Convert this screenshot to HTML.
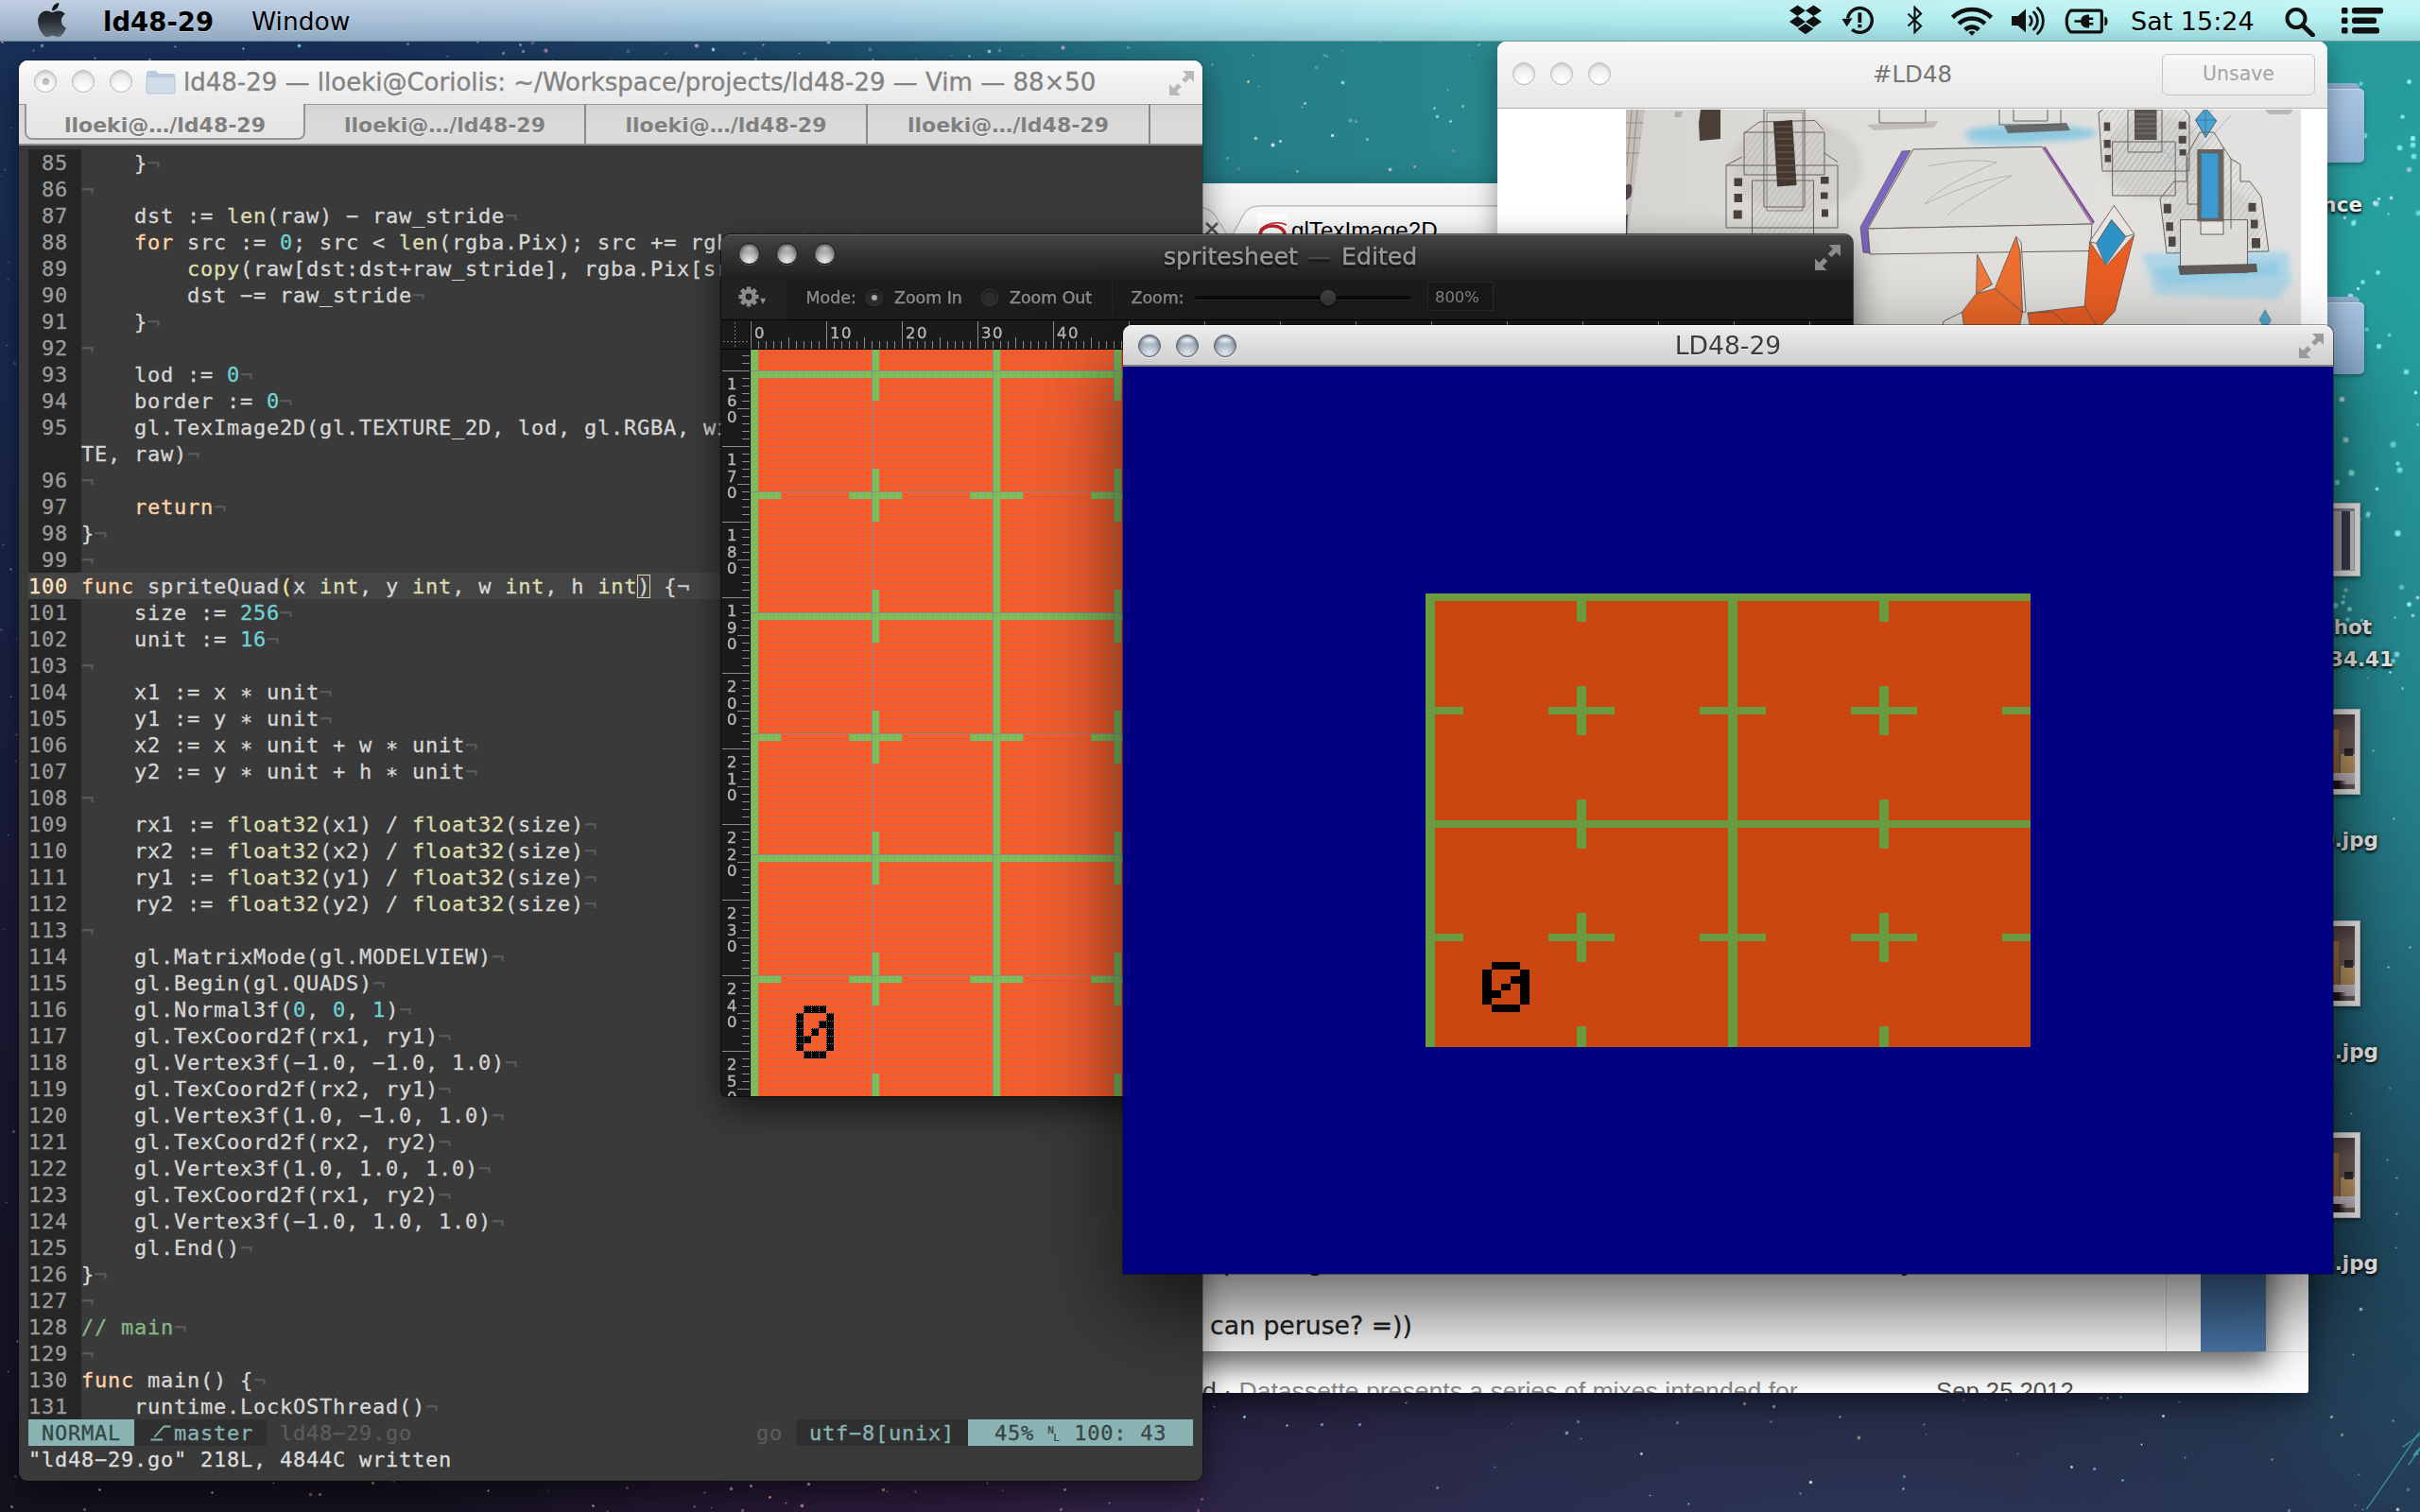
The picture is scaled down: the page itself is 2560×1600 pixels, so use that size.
<!DOCTYPE html>
<html lang="en"><head><meta charset="utf-8"><title>ld48-29</title>
<style>
*{box-sizing:border-box;margin:0;padding:0}
html,body{width:2560px;height:1600px;overflow:hidden}
body{position:relative;font-family:"Liberation Sans","DejaVu Sans",sans-serif;background-color:#17152a;
background-image:
 radial-gradient(ellipse 380px 620px at 2560px 300px, rgba(34,168,168,.7) 0%, rgba(34,160,165,.4) 50%, rgba(36,150,160,0) 100%),
 radial-gradient(ellipse 300px 700px at 2560px 950px, rgba(40,140,145,.5) 0%, rgba(36,120,135,.3) 50%, rgba(36,100,130,0) 100%),
 radial-gradient(ellipse 520px 420px at 2640px 1480px, rgba(40,88,112,.6) 0%, rgba(38,76,102,.35) 50%, rgba(36,60,90,0) 100%),
 radial-gradient(ellipse 1000px 420px at 2000px 1680px, rgba(48,60,94,.95) 0%, rgba(44,52,86,.7) 50%, rgba(40,40,70,0) 100%),
 radial-gradient(ellipse 800px 320px at 1200px 1690px, rgba(60,34,78,.95) 0%, rgba(52,30,70,.55) 55%, rgba(40,28,60,0) 100%),
 radial-gradient(ellipse 1900px 1400px at 2300px 60px, #2d9896 0%, #2a8e90 30%, #247a86 55%, rgba(30,84,112,.8) 75%, rgba(30,60,100,0) 100%),
 radial-gradient(ellipse 1700px 900px at 200px -100px, #18335c 0%, rgba(24,44,84,.7) 50%, rgba(26,30,60,0) 100%),
 linear-gradient(180deg,#1b2a50 0%,#1a1e3e 50%,#14121f 100%);}
.abs{position:absolute}
.stars{position:absolute;left:0;top:0;width:1px;height:1px;border-radius:50%;background:transparent}
/* windows */
.win{position:absolute;overflow:hidden}
.tl{position:absolute;width:24px;height:24px;border-radius:50%}
/* inactive traffic light */
.tl.in{background:radial-gradient(circle at 50% 85%,#fff 0%,#f4f4f4 40%,#e2e2e2 100%);border:1.5px solid #b9b9b9;box-shadow:inset 0 2px 3px rgba(0,0,0,.12)}
.tl.gr{background:radial-gradient(ellipse 55% 26% at 50% 20%,rgba(255,255,255,.9) 0%,rgba(255,255,255,0) 100%),radial-gradient(circle at 50% 88%,#e2e8ee 0%,#b6c2cc 35%,#8d9ba8 70%,#76838f 100%);border:1.5px solid #4f5a66;box-shadow:inset 0 1px 3px rgba(30,40,60,.5),0 1px 0 rgba(255,255,255,.7)}
.tl.dk{background:radial-gradient(ellipse 55% 24% at 50% 18%,rgba(255,255,255,.55) 0%,rgba(255,255,255,0) 100%),radial-gradient(circle at 50% 92%,#f0f0f0 0%,#bdbdbd 35%,#8a8a8a 70%,#666 100%);border:1.5px solid #141414;box-shadow:inset 0 2px 4px rgba(0,0,0,.45),0 1px 0 rgba(255,255,255,.18)}
/* terminal */
.term{position:absolute;left:10px;top:94px;width:1232px;font-family:"DejaVu Sans Mono","Liberation Mono",monospace;font-size:22px;letter-spacing:.756px;line-height:30px;-webkit-text-stroke-width:.3px;color:#d6d6d6;white-space:pre}
.r{height:28px;overflow:hidden}
.ln{background:#262626;color:#9c9c9c;display:inline-block;height:28px}
.cl{background:#444}
.cln{background:#444;color:#ffe4bd}
.k{color:#ffd2a7}.t{color:#dcdcb0}.n{color:#6fd3d3}.c{color:#87b787}.e{color:#5c5c5c}
.mp{background:#3a3a3a;color:#efe2a0}
.cur{outline:1.5px solid #d8d0b0;outline-offset:-1.5px}
.st{background:#3a3a3a}
.s1{background:#8ab4b4;color:#334646}.s2{background:#303030;color:#8ab4b4}.s3{color:#5c5c5c}
.s5{background:#303030;color:#8ab4b4}.s6{background:#8ab4b4;color:#3a4444}
.s1,.s2,.s3,.s5,.s6{display:inline-block;height:28px;vertical-align:top}
.br{display:inline-block;width:28px;height:28px;vertical-align:top}
.nl{display:inline-block;width:14px;height:28px;position:relative;vertical-align:top;letter-spacing:0}.nl b{position:absolute;font-size:11px;font-weight:normal;line-height:11px;-webkit-text-stroke-width:.2px}
.msg{color:#dcdcdc}
/* menubar */
#mb{position:absolute;left:0;top:0;width:2560px;height:44px;
background:linear-gradient(180deg,rgba(255,255,255,.28) 0%,rgba(255,255,255,.06) 45%,rgba(0,30,60,.13) 100%),
linear-gradient(90deg,#a9bcd3 0%,#a4bfd8 20%,#9fcadf 35%,#a2dae5 50%,#aae8eb 62%,#b2f1f1 100%);
border-bottom:1px solid rgba(40,80,90,.55);font-family:"DejaVu Sans","Liberation Sans",sans-serif;color:#000}
#mb .mi{position:absolute;top:2px;line-height:42px;font-size:26.5px;white-space:nowrap;text-shadow:0 1px 0 rgba(255,255,255,.5)}
#mb svg{position:absolute}
/* desktop icons */
.dl{position:absolute;font-family:"DejaVu Sans","Liberation Sans",sans-serif;font-weight:bold;font-size:21.5px;color:#eee;white-space:nowrap;text-shadow:0 2px 3px rgba(0,0,0,.95),0 0 4px rgba(0,0,0,.7);line-height:28px;text-align:right}
.fold{position:absolute;width:150px;border-radius:5px;background:linear-gradient(180deg,#a9c5e1 0%,#9dbcdc 45%,#8cb0d5 100%);box-shadow:0 2px 5px rgba(0,0,0,.35), inset 0 1px 0 rgba(255,255,255,.5)}
.foldb{position:absolute;width:150px;height:14px;border-radius:5px 5px 0 0;background:#8fb0d2}
.thumb{position:absolute;width:120px;background:#f2f2f2;border:1px solid #c4c4c4;box-shadow:0 2px 5px rgba(0,0,0,.5);padding:5px}
.thumb>div{width:100%;height:100%}
/* chrome + middle window */
#chrome{left:560px;top:194px;width:1882px;height:1280px;background:#fff;border-radius:9px 9px 2px 2px;box-shadow:0 10px 30px rgba(0,0,0,.45)}
#mid{left:600px;top:300px;width:1797px;height:1130px;background:#fff;border-radius:9px 9px 1px 1px;box-shadow:0 12px 30px 3px rgba(0,0,0,.55)}
/* ld48 */
#ld{left:1584px;top:44px;width:878px;height:1200px;background:#fff;border-radius:9px 9px 6px 6px;box-shadow:0 10px 28px rgba(0,0,0,.4)}
#ld .tb{position:absolute;left:0;top:0;width:100%;height:71px;background:linear-gradient(180deg,#f9f9f9 0%,#f0f0f0 50%,#e6e6e6 100%);border-bottom:1px solid #b4b4b4;box-shadow:inset 0 1px 0 #fff}
.ui{font-family:"DejaVu Sans","Liberation Sans",sans-serif}
#tw{left:20px;top:64px;width:1252px;height:1503px;background:#3a3a3a;border-radius:9px;box-shadow:0 12px 32px rgba(0,0,0,.5),0 0 0 1px rgba(0,0,0,.25)}
#tw .tb{position:absolute;left:0;top:0;width:100%;height:90px;background:linear-gradient(180deg,#fbfbfb 0%,#f1f1f1 25%,#e9e9e9 52%,#e6e6e6 100%);box-shadow:inset 0 1px 0 #fff}
#tw .tabs{position:absolute;left:0;top:46px;width:100%;height:44px;background:linear-gradient(180deg,#d4d4d4 0%,#d9d9d9 30%,#dbdbdb 100%);border-top:1.5px solid #9c9c9c;border-bottom:2px solid #8a8a8a}
#tw .tab{position:absolute;top:-1.5px;height:43px;width:298px;border-right:2px solid #8a8a8a;text-align:center;font-family:"DejaVu Sans","Liberation Sans",sans-serif;font-weight:bold;font-size:22px;color:#7f7f7f;line-height:46px;text-shadow:0 1px 0 rgba(255,255,255,.6);white-space:nowrap}
#tw .tab.sel{left:6px;width:297px;height:38.5px;background:linear-gradient(180deg,#e9e9e9,#e5e5e5);border:2px solid #959595;border-top:none;border-radius:0 0 8px 8px;line-height:46px}
.fs{position:absolute}
#sw{left:763px;top:248px;width:1197px;height:912px;background:#1b1b1b;border-radius:9px 9px 5px 5px;box-shadow:0 14px 36px rgba(0,0,0,.6),0 0 0 1px rgba(0,0,0,.6)}
#sw .tb{position:absolute;left:0;top:0;width:100%;height:47px;background:linear-gradient(180deg,#484848 0%,#3a3a3a 25%,#2a2a2a 70%,#202020 100%);box-shadow:inset 0 1px 0 #6a6a6a}
#sw .tool{position:absolute;left:0;top:47px;width:100%;height:44px;background:#1c1c1c;border-top:1px solid #1e1e1e;border-bottom:1.5px solid #050505}
#sw .lbl{position:absolute;top:54.5px;-webkit-text-stroke-width:.45px;font-family:"DejaVu Sans","Liberation Sans",sans-serif;font-size:17.4px;line-height:24px;color:#8c8c8c;white-space:nowrap;text-shadow:0 -1px 1px #000}
.rad{position:absolute;width:18px;height:18px;border-radius:50%;background:#2c2c2c;border:1px solid #3e3e3e;box-shadow:inset 0 1px 2px #000}
#sw .rt{position:absolute;letter-spacing:1.6px;-webkit-text-stroke-width:.4px;font-family:"DejaVu Sans","Liberation Sans",sans-serif;font-size:16.5px;color:#b4b4b4;line-height:16px}
#gw{left:1188px;top:344px;width:1280px;height:1004px;background:#000080;border-radius:9px 9px 0 0;box-shadow:0 36px 92px 0 rgba(0,0,0,.65),0 0 0 1px rgba(0,0,0,.35)}
#gw .tb{position:absolute;left:0;top:0;width:100%;height:44px;background:linear-gradient(180deg,#eeeeee 0%,#e0e0e0 40%,#cecece 100%);border-bottom:2px solid #7e7e7e;box-shadow:inset 0 1px 0 #fafafa}

</style></head>
<body>
<div class="stars" style="box-shadow:2511px 214px 0.5px 0.7px rgba(235,245,255,0.83),2538px 156px 1.5px 2.2px rgba(150,255,255,0.79),2497px 98px 0.5px 0.7px rgba(150,255,255,0.72),2481px 624px 1.1px 1.6px rgba(235,245,255,0.53),2498px 656px 0.9px 1.3px rgba(150,255,255,0.79),2498px 107px 0.6px 0.9px rgba(150,255,255,0.64),2485px 644px 1.2px 1.8px rgba(150,255,255,0.78),2483px 655px 1.1px 1.6px rgba(150,255,255,0.69),2478px 637px 1.0px 1.5px rgba(150,255,255,0.81),2538px 497px 1.5px 2.3px rgba(150,255,255,0.73),2516px 366px 1.2px 1.9px rgba(150,255,255,0.90),2501px 143px 1.5px 2.2px rgba(150,255,255,0.76),2527px 354px 0.9px 1.4px rgba(150,255,255,0.56),2513px 215px 1.6px 2.3px rgba(235,245,255,0.71),2479px 631px 0.8px 1.2px rgba(150,255,255,0.67),2533px 653px 0.5px 0.8px rgba(235,245,255,0.53),2504px 545px 1.2px 1.9px rgba(150,255,255,0.53),2552px 651px 0.9px 1.3px rgba(235,245,255,0.64),2555px 415px 0.8px 1.2px rgba(150,255,255,0.97),2548px 179px 1.3px 2.0px rgba(235,245,255,0.53),2486px 313px 1.4px 2.2px rgba(235,245,255,0.70),2480px 230px 0.7px 1.1px rgba(235,245,255,0.70),2487px 500px 1.6px 2.4px rgba(150,255,255,0.85),2557px 449px 0.6px 0.9px rgba(150,255,255,0.58),2499px 298px 1.1px 1.7px rgba(150,255,255,0.74),2503px 348px 1.0px 1.6px rgba(150,255,255,0.57),2548px 639px 1.2px 1.8px rgba(150,255,255,0.98),2535px 692px 1.4px 2.2px rgba(150,255,255,0.73),2557px 632px 0.9px 1.3px rgba(235,245,255,0.70),2531px 470px 1.6px 2.4px rgba(150,255,255,0.60),2526px 226px 0.5px 0.7px rgba(150,255,255,0.67),2470px 640px 1.5px 2.3px rgba(150,255,255,0.77),2548px 86px 1.1px 1.7px rgba(150,255,255,0.94),2489px 318px 1.0px 1.5px rgba(150,255,255,0.80),2484px 559px 0.8px 1.2px rgba(235,245,255,0.74),2488px 164px 1.0px 1.5px rgba(150,255,255,0.87),2558px 225px 1.5px 2.3px rgba(150,255,255,0.60),2516px 210px 0.8px 1.1px rgba(150,255,255,0.88),2552px 153px 1.5px 2.2px rgba(150,255,255,0.76),2515px 288px 1.1px 1.7px rgba(150,255,255,0.82),2494px 305px 0.7px 1.0px rgba(235,245,255,0.87),2536px 564px 1.6px 2.4px rgba(150,255,255,0.87),2505px 543px 1.1px 1.7px rgba(150,255,255,0.60),2514px 517px 0.8px 1.3px rgba(150,255,255,0.98),2498px 164px 0.8px 1.2px rgba(150,255,255,0.74),2531px 699px 1.2px 1.8px rgba(150,255,255,0.74),2552px 146px 1.3px 2.0px rgba(150,255,255,0.95),2495px 549px 1.2px 1.7px rgba(150,255,255,0.72),2481px 465px 1.5px 2.3px rgba(235,245,255,0.70),2490px 234px 1.1px 1.7px rgba(150,255,255,0.51),2529px 209px 0.8px 1.2px rgba(235,245,255,0.83),2540px 621px 1.4px 2.0px rgba(150,255,255,0.51),2553px 165px 1.4px 2.2px rgba(150,255,255,0.72),2497px 88px 1.0px 1.5px rgba(150,255,255,0.61),2545px 393px 1.4px 2.1px rgba(150,255,255,0.77),2477px 422px 1.4px 2.1px rgba(235,245,255,0.83),2536px 490px 1.0px 1.5px rgba(150,255,255,0.77),2472px 510px 1.3px 2.0px rgba(150,255,255,0.80),2489px 236px 1.3px 1.9px rgba(150,255,255,0.74),2541px 123px 1.0px 1.6px rgba(150,255,255,0.84),2531px 1503px 0.3px 0.4px rgba(150,255,255,0.74),2494px 983px 0.6px 0.9px rgba(150,255,255,0.69),2541px 728px 0.6px 1.0px rgba(150,255,255,0.52),2534px 1320px 0.4px 0.6px rgba(255,250,200,0.40),2535px 1246px 0.4px 0.6px rgba(235,245,255,0.55),2536px 1597px 0.8px 1.2px rgba(235,245,255,0.76),2495px 1560px 0.3px 0.5px rgba(235,245,255,0.37),2526px 1023px 0.5px 0.8px rgba(150,255,255,0.64),2497px 1385px 0.8px 1.2px rgba(235,245,255,0.69),2489px 1433px 0.3px 0.5px rgba(255,250,200,0.63),2487px 1178px 0.3px 0.5px rgba(150,255,255,0.67),2532px 866px 0.4px 0.5px rgba(255,250,200,0.72),2525px 1227px 0.4px 0.6px rgba(235,245,255,0.47),2510px 794px 0.5px 0.7px rgba(255,250,200,0.48),2528px 1151px 0.5px 0.7px rgba(255,250,200,0.31),2549px 1002px 0.3px 0.5px rgba(255,250,200,0.78),2499px 1597px 0.4px 0.6px rgba(150,255,255,0.34),2493px 976px 0.8px 1.2px rgba(150,255,255,0.71),2556px 1538px 0.6px 0.9px rgba(235,245,255,0.50),2535px 1284px 0.3px 0.5px rgba(235,245,255,0.65),2477px 1518px 0.8px 1.2px rgba(255,250,200,0.39),2504px 717px 0.4px 0.6px rgba(255,250,200,0.34),2547px 1576px 0.8px 1.2px rgba(150,255,255,0.33),2528px 711px 0.5px 0.8px rgba(235,245,255,0.80),2504px 1336px 0.7px 1.1px rgba(150,255,255,0.32),1331px 91px 0.4px 0.6px rgba(235,245,255,0.33),1434px 128px 0.5px 0.7px rgba(230,160,190,0.76),1531px 95px 0.3px 0.4px rgba(235,245,255,0.51),1403px 59px 0.7px 1.0px rgba(150,255,255,0.31),1372px 181px 0.6px 0.9px rgba(255,250,200,0.45),1496px 176px 0.6px 0.9px rgba(230,160,190,0.80),1534px 128px 0.5px 0.8px rgba(150,255,255,0.89),1346px 153px 1.0px 1.4px rgba(235,245,255,0.89),1282px 68px 0.3px 0.4px rgba(235,245,255,0.56),1470px 179px 0.8px 1.3px rgba(235,245,255,0.66),1298px 167px 0.6px 0.9px rgba(150,255,255,0.39),1409px 143px 0.7px 1.1px rgba(235,245,255,0.88),1400px 58px 0.4px 0.6px rgba(235,245,255,0.43),1446px 147px 0.7px 1.0px rgba(150,255,255,0.58),1377px 113px 0.3px 0.5px rgba(230,160,190,0.77),1320px 86px 0.6px 0.9px rgba(255,250,200,0.65),1428px 127px 1.1px 1.6px rgba(150,255,255,0.35),1354px 149px 0.7px 1.0px rgba(235,245,255,0.73),1420px 87px 0.9px 1.3px rgba(150,255,255,0.79),1537px 159px 0.7px 1.0px rgba(230,160,190,0.38),1533px 195px 0.7px 1.1px rgba(150,255,255,0.80),1392px 71px 0.8px 1.2px rgba(150,255,255,0.33),1328px 146px 0.8px 1.2px rgba(255,250,200,0.64),1547px 112px 0.6px 1.0px rgba(255,250,200,0.46),1310px 178px 0.7px 1.0px rgba(230,160,190,0.36),1517px 114px 0.4px 0.7px rgba(150,255,255,0.81),1380px 109px 0.6px 0.9px rgba(255,250,200,0.60),1520px 123px 0.8px 1.2px rgba(150,255,255,0.67),158px 63px 0.7px 1.1px rgba(235,245,255,0.47),1419px 53px 0.3px 0.4px rgba(235,245,255,0.31),550px 47px 0.5px 0.7px rgba(235,245,255,0.64),1057px 53px 0.8px 1.2px rgba(150,180,255,0.53),1124px 50px 1.0px 1.4px rgba(230,160,190,0.79),35px 53px 0.6px 0.9px rgba(150,180,255,0.34),920px 52px 1.0px 1.4px rgba(150,180,255,0.40),431px 46px 0.6px 1.0px rgba(150,255,255,0.37),736px 48px 0.8px 1.2px rgba(230,160,190,0.74),473px 59px 0.4px 0.6px rgba(150,180,255,0.50),1006px 58px 0.4px 0.5px rgba(150,180,255,0.45),704px 56px 0.5px 0.7px rgba(230,160,190,0.36),664px 54px 0.9px 1.4px rgba(150,180,255,0.36),1460px 44px 0.3px 0.4px rgba(230,160,190,0.43),799px 62px 0.6px 0.9px rgba(150,255,255,0.48),563px 45px 0.9px 1.3px rgba(230,160,190,0.35),584px 64px 0.4px 0.7px rgba(235,245,255,0.42),1046px 54px 0.8px 1.3px rgba(235,245,255,0.69),876px 44px 1.0px 1.4px rgba(150,180,255,0.76),1124px 50px 0.8px 1.2px rgba(150,255,255,0.32),923px 63px 0.5px 0.7px rgba(235,245,255,0.62),100px 61px 0.6px 0.8px rgba(235,245,255,0.39),577px 53px 1.0px 1.5px rgba(230,160,190,0.67),532px 56px 0.7px 1.0px rgba(235,245,255,0.45),807px 47px 0.3px 0.5px rgba(235,245,255,0.62),1025px 59px 0.5px 0.7px rgba(235,245,255,0.53),1554px 58px 0.4px 0.6px rgba(150,180,255,0.37),185px 49px 0.5px 0.7px rgba(230,160,190,0.58),754px 52px 0.8px 1.2px rgba(235,245,255,0.74),845px 56px 0.4px 0.6px rgba(150,180,255,0.67),553px 54px 0.7px 1.0px rgba(150,255,255,0.55),737px 48px 0.9px 1.4px rgba(235,245,255,0.35),787px 56px 0.5px 0.7px rgba(150,180,255,0.52),44px 48px 0.8px 1.2px rgba(150,255,255,0.51),969px 62px 0.5px 0.8px rgba(150,180,255,0.30),1081px 58px 0.3px 0.5px rgba(150,180,255,0.42),316px 48px 0.8px 1.2px rgba(150,255,255,0.77),1325px 58px 0.3px 0.4px rgba(150,255,255,0.58),257px 51px 0.5px 0.7px rgba(150,255,255,0.62),262px 64px 0.6px 0.9px rgba(230,160,190,0.56),1564px 47px 0.6px 1.0px rgba(150,255,255,0.34),1193px 50px 0.8px 1.3px rgba(150,180,255,0.43),2px 44px 0.5px 0.7px rgba(230,160,190,0.80),647px 64px 0.4px 0.6px rgba(235,245,255,0.54),505px 44px 0.5px 0.7px rgba(150,180,255,0.65),1316px 1499px 0.6px 0.9px rgba(150,255,255,0.83),1438px 1507px 0.8px 1.1px rgba(150,180,255,0.70),1736px 1538px 0.6px 0.9px rgba(235,245,255,0.72),2014px 1562px 0.7px 1.0px rgba(150,255,255,0.42),2305px 1483px 0.3px 0.5px rgba(150,180,255,0.60),1669px 1504px 0.7px 1.0px rgba(150,255,255,0.43),1876px 1488px 0.7px 1.1px rgba(150,255,255,0.67),2265px 1528px 0.3px 0.4px rgba(235,245,255,0.87),2077px 1481px 0.6px 0.8px rgba(150,180,255,0.31),2122px 1481px 0.5px 0.7px rgba(235,245,255,0.41),1915px 1568px 0.8px 1.1px rgba(235,245,255,0.90),1946px 1499px 0.5px 0.8px rgba(150,180,255,0.69),2229px 1479px 0.4px 0.6px rgba(255,250,200,0.70),2037px 1517px 0.2px 0.3px rgba(150,255,255,0.40),1845px 1485px 0.7px 1.1px rgba(255,250,200,0.55),2421px 1598px 0.7px 1.0px rgba(150,180,255,0.53),1904px 1580px 0.6px 0.9px rgba(150,255,255,0.35),1672px 1522px 0.4px 0.6px rgba(150,255,255,0.42),2243px 1478px 0.6px 0.9px rgba(150,255,255,0.45),2100px 1480px 0.2px 0.4px rgba(150,255,255,0.32),1398px 1507px 0.7px 1.1px rgba(150,180,255,0.75),1966px 1521px 0.8px 1.2px rgba(255,250,200,0.50),1361px 1508px 0.4px 0.6px rgba(255,250,200,0.85),2491px 1592px 0.3px 0.5px rgba(235,245,255,0.31),2245px 1566px 0.4px 0.6px rgba(150,255,255,0.87),1786px 1591px 0.3px 0.4px rgba(150,255,255,0.79),2288px 1498px 0.6px 1.0px rgba(235,245,255,0.78),1581px 1552px 0.4px 0.6px rgba(150,180,255,0.50),2013px 1575px 0.4px 0.7px rgba(235,245,255,0.61),1599px 1506px 0.2px 0.3px rgba(150,255,255,0.34),2403px 1544px 0.5px 0.7px rgba(255,250,200,0.40),1487px 1484px 0.3px 0.5px rgba(255,250,200,0.67),2134px 1538px 0.3px 0.4px rgba(150,255,255,0.40),2215px 1554px 0.7px 1.1px rgba(150,180,255,0.75),1520px 1574px 0.5px 0.8px rgba(255,250,200,0.48),2035px 1507px 0.3px 0.5px rgba(255,250,200,0.42),1774px 1505px 0.7px 1.1px rgba(150,180,255,0.47),1657px 1516px 0.8px 1.2px rgba(235,245,255,0.54),2311px 1542px 0.3px 0.4px rgba(150,180,255,0.69),2222px 1479px 0.7px 1.1px rgba(235,245,255,0.30),1745px 1582px 0.2px 0.3px rgba(150,255,255,0.85),1873px 1504px 0.6px 0.8px rgba(235,245,255,0.33),2466px 1499px 0.7px 1.1px rgba(235,245,255,0.52),2191px 1552px 0.6px 0.9px rgba(255,250,200,0.76),1284px 1488px 0.4px 0.6px rgba(255,250,200,0.43),289px 1569px 0.2px 0.3px rgba(230,160,190,0.90),416px 1567px 0.4px 0.6px rgba(255,250,200,0.55),1271px 1586px 0.7px 1.0px rgba(230,160,190,0.42),1122px 1597px 0.7px 1.0px rgba(230,160,190,0.54),1126px 1576px 0.6px 0.9px rgba(235,245,255,0.62),814px 1584px 0.6px 0.9px rgba(255,150,130,0.89),855px 1570px 0.7px 1.1px rgba(255,250,200,0.75),848px 1593px 0.8px 1.2px rgba(230,160,190,0.82),745px 1579px 0.3px 0.5px rgba(255,150,130,0.74),12px 1594px 0.7px 1.0px rgba(230,160,190,0.55),831px 1590px 0.3px 0.4px rgba(255,150,130,0.76),105px 1576px 0.4px 0.7px rgba(235,245,255,0.78),1173px 1590px 0.3px 0.4px rgba(235,245,255,0.60),580px 1577px 0.2px 0.4px rgba(255,170,120,0.40),785px 1598px 0.7px 1.1px rgba(230,160,190,0.48),89px 1597px 0.8px 1.1px rgba(255,250,200,0.33),794px 1572px 0.7px 1.0px rgba(235,245,255,0.67),328px 1581px 0.7px 1.1px rgba(255,170,120,0.54),968px 1578px 0.4px 0.7px rgba(255,170,120,0.43),1060px 1577px 0.3px 0.4px rgba(255,150,130,0.52),394px 1569px 0.6px 0.9px rgba(255,170,120,0.81),663px 1574px 0.5px 0.8px rgba(255,150,130,0.66),627px 1593px 0.5px 0.7px rgba(255,250,200,0.65),752px 1595px 0.2px 0.3px rgba(255,170,120,0.56),1267px 1598px 0.7px 1.0px rgba(255,150,130,0.44),938px 1578px 0.2px 0.4px rgba(255,150,130,0.54),734px 1594px 0.5px 0.7px rgba(255,250,200,0.36),1044px 1569px 0.2px 0.4px rgba(230,160,190,0.68),642px 1599px 0.5px 0.8px rgba(230,160,190,0.33),773px 1575px 0.8px 1.2px rgba(230,160,190,0.81),224px 1579px 0.5px 0.7px rgba(230,160,190,0.89),338px 1581px 0.6px 0.8px rgba(230,160,190,0.80),516px 1577px 0.4px 0.5px rgba(255,250,200,0.84),934px 1576px 0.8px 1.1px rgba(255,250,200,0.60),6px 1272px 0.3px 0.5px rgba(150,180,255,0.45),11px 135px 0.3px 0.4px rgba(235,245,255,0.27),8px 1451px 0.3px 0.4px rgba(150,180,255,0.56),8px 295px 0.6px 0.9px rgba(230,160,190,0.22),14px 1197px 0.6px 1.0px rgba(230,160,190,0.43),3px 576px 0.4px 0.6px rgba(230,160,190,0.45),11px 602px 0.5px 0.7px rgba(150,180,255,0.60),11px 737px 0.3px 0.4px rgba(235,245,255,0.38),1px 666px 0.5px 0.8px rgba(230,160,190,0.30),18px 1419px 0.6px 0.9px rgba(150,180,255,0.49),7px 365px 0.4px 0.6px rgba(150,180,255,0.45),16px 805px 0.3px 0.5px rgba(235,245,255,0.25),20px 153px 0.5px 0.7px rgba(235,245,255,0.22),9px 277px 0.3px 0.5px rgba(230,160,190,0.34),18px 676px 0.4px 0.6px rgba(230,160,190,0.25),15px 384px 0.6px 0.9px rgba(235,245,255,0.21),4px 983px 0.3px 0.4px rgba(235,245,255,0.23),8px 883px 0.2px 0.3px rgba(150,180,255,0.59),17px 777px 0.4px 0.6px rgba(230,160,190,0.46),16px 1562px 0.7px 1.0px rgba(150,180,255,0.30),1px 186px 0.3px 0.4px rgba(230,160,190,0.21),5px 179px 0.5px 0.7px rgba(235,245,255,0.20)"></div>
<!-- desktop icons on the right strip -->
<div class="foldb" style="left:2346px;top:88px"></div><div class="fold" style="left:2351px;top:94px;height:78px"></div>
<div class="dl" style="right:61px;top:203px">Reference</div>
<div class="foldb" style="left:2346px;top:314px"></div><div class="fold" style="left:2351px;top:320px;height:76px"></div>
<div class="thumb" style="left:2377px;top:532px;height:78px"><div style="background:linear-gradient(90deg,#c2c2c2 0%,#b4b4b4 88%,#453f58 88%,#453f58 96.500%,#d0d0d0 96.500%);border:1px solid #aaa;border-top:3px solid #8a8a90"></div></div>
<div class="dl" style="right:51px;top:650px">Screen Shot</div>
<div class="dl" style="right:28px;top:684px">2014-0…15.34.41</div>
<div class="thumb" style="left:2377px;top:750px;height:91px"><div style="background:linear-gradient(90deg,#1e181c 0%,#1e181c 84%,rgba(30,24,28,0) 92%) no-repeat 0 70px/108px 9px,linear-gradient(180deg,#cfc6cc,#b8aeb6) no-repeat 80px 62px/28px 12px,linear-gradient(180deg,#2a2228,#3a3038) no-repeat 97px 36px/9px 8px,linear-gradient(180deg,#c8a26e,#b48c5a) no-repeat 93px 42px/15px 24px,linear-gradient(180deg,#b4834e,#9c6c3e) no-repeat 83px 16px/8px 50px,linear-gradient(180deg,#54464a 0%,#75645e 30%,#6c5c56 100%)"></div></div>
<div class="dl" style="right:44px;top:875px">IMG_0450.jpg</div>
<div class="thumb" style="left:2377px;top:974px;height:91px"><div style="background:linear-gradient(90deg,#1e181c 0%,#1e181c 84%,rgba(30,24,28,0) 92%) no-repeat 0 70px/108px 9px,linear-gradient(180deg,#cfc6cc,#b8aeb6) no-repeat 80px 62px/28px 12px,linear-gradient(180deg,#2a2228,#3a3038) no-repeat 97px 36px/9px 8px,linear-gradient(180deg,#c8a26e,#b48c5a) no-repeat 93px 42px/15px 24px,linear-gradient(180deg,#b4834e,#9c6c3e) no-repeat 83px 16px/8px 50px,linear-gradient(180deg,#54464a 0%,#75645e 30%,#6c5c56 100%)"></div></div>
<div class="dl" style="right:44px;top:1099px">IMG_0451.jpg</div>
<div class="thumb" style="left:2377px;top:1198px;height:91px"><div style="background:linear-gradient(90deg,#1e181c 0%,#1e181c 84%,rgba(30,24,28,0) 92%) no-repeat 0 70px/108px 9px,linear-gradient(180deg,#cfc6cc,#b8aeb6) no-repeat 80px 62px/28px 12px,linear-gradient(180deg,#2a2228,#3a3038) no-repeat 97px 36px/9px 8px,linear-gradient(180deg,#c8a26e,#b48c5a) no-repeat 93px 42px/15px 24px,linear-gradient(180deg,#b4834e,#9c6c3e) no-repeat 83px 16px/8px 50px,linear-gradient(180deg,#54464a 0%,#75645e 30%,#6c5c56 100%)"></div></div>
<div class="dl" style="right:44px;top:1323px">IMG_0452.jpg</div>
<svg class="abs" style="left:2490px;top:1500px" width="70" height="100" viewBox="0 0 70 100"><g fill="none" stroke="#3f9f9c" stroke-width="1.400" stroke-linecap="round" opacity=".85"><path d="M13.700 96.600C30 74 50 44 69 16"/><path d="M58 50C62 44 66 38 70 33"/><path d="M52 31C58 27 64 22 70 18"/><path d="M64 40C66 37 68 35 70 33" stroke-width="3"/></g></svg>
<!-- browser window (back) -->
<div class="win" id="chrome">
<div class="abs" style="left:0;top:0;width:100%;height:60px;background:linear-gradient(180deg,#f7f7f7 0%,#ececec 60%,#e4e4e4 100%)"></div>
<svg class="abs" style="left:700px;top:18px" width="330" height="46" viewBox="0 0 330 46"><path d="M0 6.500C14 6.500 22 9 28 20L40 40H0z" fill="#e9e9e9" stroke="#b9b9b9" stroke-width="1.200"/><path d="M42 40 55 16C59 9 64 5.800 74 5.800H330V40z" fill="#f7f7f7" stroke="#b4b4b4" stroke-width="1.200"/><path d="M16 24l12 12m0-12-12 12" stroke="#555" stroke-width="2.600" fill="none"/><rect x="70" y="14" width="32" height="30" fill="#fff"/><g fill="none" stroke="#c4242c"><ellipse cx="86" cy="36" rx="13" ry="9" stroke-width="3.600"/><path d="M73 31C81 23 93 22 101 26" stroke-width="1.600"/></g></svg>
<div class="abs" style="left:806px;top:35px;font-size:24.2px;line-height:30px;color:#000;white-space:nowrap">glTexImage2D</div>
<div class="abs" style="left:0;top:1236px;width:100%;height:1px;background:#e4e4e4"></div>
<div class="abs" style="left:712px;top:1262px;font-size:26.6px;color:#8c8c8c;white-space:nowrap;line-height:32px"><span style="color:#444">d ·</span> Datassette presents a series of mixes intended for</div>
<div class="abs" style="left:1488px;top:1262px;font-size:25.7px;color:#555;white-space:nowrap;line-height:32px">Sep 25 2012</div>
</div>
<!-- middle window -->
<div class="win" id="mid">
<div class="abs" style="left:1691px;top:0;width:1px;height:100%;background:#dcdcdc"></div>
<div class="abs" style="left:1728px;top:0;width:69px;height:100%;background:linear-gradient(180deg,#3a5f8c 0%,#41699a 90%,#4a77a8 100%)"></div>
<div class="abs" style="left:680px;top:1018px;font-family:'DejaVu Sans','Liberation Sans',sans-serif;font-size:26.7px;color:#222;white-space:nowrap;line-height:34px">speaking of which will there be a behind the scene bit you</div>
<div class="abs" style="left:680px;top:1086px;font-family:'DejaVu Sans','Liberation Sans',sans-serif;font-size:26.7px;color:#222;-webkit-text-stroke-width:.3px;white-space:nowrap;line-height:34px">can peruse? =))</div>
</div>
<!-- #LD48 window -->
<div class="win" id="ld">
<div class="tb"></div>
<div class="tl in" style="left:16px;top:22px"></div><div class="tl in" style="left:56px;top:22px"></div><div class="tl in" style="left:96px;top:22px"></div>
<div class="abs ui" style="left:0;top:17px;width:100%;text-align:center;font-size:24.5px;color:#757575;line-height:36px">#LD48</div>
<div class="abs ui" style="left:703px;top:13px;width:162px;height:44px;border:1.5px solid #c6c6c6;border-radius:6px;background:linear-gradient(180deg,#f8f8f8,#ececec);text-align:center;font-size:20.5px;line-height:40px;color:#a4a4a4">Unsave</div>
<svg class="abs" style="left:136px;top:72px;filter:blur(.7px)" width="714" height="232" viewBox="0 0 714 232">
<defs><filter id="bl" x="-10%" y="-30%" width="120%" height="160%"><feGaussianBlur stdDeviation="3"/></filter><linearGradient id="pap" x1="0" y1="0" x2="1" y2="0"><stop offset="0" stop-color="#d6d4d0"/><stop offset=".4" stop-color="#e0dfdc"/><stop offset="1" stop-color="#e2e1df"/></linearGradient>
<pattern id="hat" width="5" height="5" patternUnits="userSpaceOnUse" patternTransform="rotate(-55)"><path d="M0 2.500H5" stroke="#888" stroke-width=".8" opacity=".32"/></pattern>
<pattern id="hat2" width="3" height="3" patternUnits="userSpaceOnUse"><path d="M0 1.500H3" stroke="#2c2622" stroke-width="1.500"/></pattern></defs>
<rect width="714" height="232" fill="url(#pap)"/>
<!-- notebook edge -->
<path d="M0 0H20L2 132H0z" fill="#c4bfbb"/><path d="M6 0 1 60M12 0 4 90M0 14H18M0 30H16M0 46H14" stroke="#8a8480" stroke-width=".8" fill="none"/><path d="M0 80C6 76 8 82 5 92L0 96zM0 112 2 110 1 132H0z" fill="#4e4450"/>
<!-- blue scribbles -->
<g filter="url(#bl)"><ellipse cx="428" cy="25" rx="70" ry="9" fill="#7fc4e0" opacity=".85"/><ellipse cx="400" cy="32" rx="40" ry="6" fill="#8fcde6" opacity=".7"/></g>
<g filter="url(#bl)"><path d="M546 152 700 150 704 182 690 200 560 196z" fill="#9ed3ea" opacity=".75"/><path d="M556 168 690 160 692 176 570 186z" fill="#86c7e3" opacity=".6"/><ellipse cx="180" cy="60" rx="70" ry="50" fill="#b9b6b2" opacity=".35"/><ellipse cx="560" cy="50" rx="55" ry="45" fill="#b9b6b2" opacity=".35"/><ellipse cx="620" cy="120" rx="50" ry="40" fill="#b9b6b2" opacity=".3"/></g>
<!-- dark tower top-left -->
<path d="M79 0H100L100 31 78 33 77 14z" fill="#4b4138"/><path d="M52 2h8l-2 6h-7z" fill="#999" opacity=".6"/>
<!-- left building -->
<g fill="none" stroke="#67625d" stroke-width="1" stroke-linejoin="round">
<rect x="125" y="24" width="85" height="45" fill="url(#hat)"/><path d="M125 25 141 13 200 11.500 209 21.500"/>
<rect x="106" y="59" width="118" height="66"/><path d="M106 59 123 50M224 55.500 210 46"/>
<rect x="146" y="0" width="43" height="103"/><rect x="149" y="3" width="38" height="104" stroke-width=".7"/>
<rect x="133.500" y="75" width="65" height="62" fill="url(#hat)"/>
</g>
<path d="M156 13 176 11 180.500 80 160 81.500z" fill="#42382f"/><path d="M158 18H177M158 24H178M159 31H178M159 38H179M159 45H179M160 52H179M160 59H180M160 66H180M161 73H180" stroke="#7a6f66" stroke-width=".8"/>
<g fill="#4a4038"><rect x="114.500" y="72.500" width="8.500" height="8.500"/><rect x="114.500" y="89" width="8.500" height="9"/><rect x="113.700" y="106.500" width="9" height="9"/><rect x="206" y="71" width="8.500" height="7.500"/><rect x="206" y="87.500" width="7.500" height="7"/><rect x="207" y="105.500" width="7" height="8"/></g>
<!-- top middle box -->
<g fill="none" stroke="#67625d" stroke-width="1"><path d="M268 0V14H317V0"/><path d="M395 0V16H460V0M410 0V12H446V0"/></g>
<path d="M255 16 330 12 326 19 262 22z" fill="#aaa6a2" opacity=".6"/><path d="M400 17 466 14 470 22 404 25z" fill="#5e5a57" opacity=".85"/>
<!-- slab -->
<path d="M304 42 440 39.300 493 121 256 126z" fill="#dcdbd7" stroke="#67625d" stroke-width="1"/>
<path d="M256 126 493 121 491 149.500 258 153z" fill="#dfdedb" stroke="#67625d" stroke-width="1"/>
<path d="M292 44 301 43.500 255 125.500 258 152 251 151 248 124.500z" fill="#7b66c4" stroke="#5b5651" stroke-width=".8"/>
<path d="M441 39.500 444 39.500 496 119 494 121z" fill="#8a4aa0"/>
<path d="M320 60C350 54 372 52 392 56 360 70 330 84 316 100 350 84 384 72 408 70 380 86 352 100 340 112" fill="none" stroke="#a9a7a3" stroke-width="1" opacity=".8"/>
<!-- fox -->
<g stroke="#6a5a50" stroke-width=".9" stroke-linejoin="round">
<path d="M371.500 153 387.500 185 370.600 194.800z" fill="#f07a3c"/>
<path d="M412.700 134.400 390.200 189.500 419.500 214.300 417 150z" fill="#ee6f30"/><path d="M412.700 134.400 417 150 419.500 214.300 423 214 418 140z" fill="#e8e6e2"/>
<path d="M390.200 189.500 419.500 214.300 416 232H356L355.500 214.300 370.600 194.800z" fill="#ec6a2a"/>
<path d="M336 224 355.500 214.300 358 232H334z" fill="#e4e2de"/>
<path d="M490.600 139.700 508.300 165.500 537.700 132.600 517.200 213.400 499.500 232H428L424.800 215.200 485.200 208z" fill="#ea5e24"/>
<path d="M516.300 101.500 537.700 131.700 528.800 134.400 513.700 116.600 497.700 141.500 490.600 139.700z" fill="#e6e4e0"/>
<path d="M513.700 116.600 528.800 134.400 507.500 164.600 497.700 141.500z" fill="#2d93c6"/>
<path d="M424.800 215.200 452 214 470 232M485.200 208 500 232" fill="none"/>
</g>
<!-- right building 1 -->
<g fill="none" stroke="#67625d" stroke-width="1" stroke-linejoin="round">
<path d="M500 3 506 -1H590L596 6V65H504z" fill="url(#hat)"/><rect x="514.600" y="34" width="66.600" height="57" fill="url(#hat)"/><rect x="531" y="0" width="36" height="45"/>
<path d="M560 30 590 70M620 0 574 52M640 6 600 50" stroke="#8cb8d0" stroke-width=".9"/>
</g>
<rect x="538" y="0" width="23.500" height="32" fill="#59544f"/><path d="M539 5H561M539 10H561M539 15H561M539 20H561M539 25H561" stroke="#8a857f" stroke-width=".8"/>
<g fill="#4d4741"><rect x="505.700" y="13.500" width="6.500" height="9"/><rect x="505.700" y="32" width="7" height="8.500"/><rect x="506.600" y="48" width="6.500" height="7.500"/><rect x="584.700" y="12.700" width="8" height="8"/><rect x="584.700" y="27.800" width="8" height="8"/><rect x="585.600" y="42" width="7" height="6.500"/></g>
<path d="M613.200 -1.600 624.700 11.800 613.200 29.500 602.500 10.900z" fill="#4aa3d0" stroke="#3a5a70" stroke-width=".9"/><path d="M613 0V29M603 11H624" stroke="#2a6a90" stroke-width=".6"/>
<!-- right building 2 -->
<g fill="none" stroke="#67625d" stroke-width="1" stroke-linejoin="round">
<path d="M565 94 580 76H593V50L598 40 607 24 622 24 632 40 640 52 650 58V76H660L672 92 680 150 572 152z" fill="url(#hat)"/>
<rect x="586.500" y="116.600" width="71" height="56" fill="#dcdbd8"/><rect x="608" y="116" width="24" height="16" fill="#e4e3e0"/>
<path d="M594 50V100H608M640 52V126M632 40V118"/>
</g>
<rect x="604.300" y="42" width="27.500" height="76.400" fill="#66625e"/><rect x="608.700" y="46.400" width="17.800" height="68.400" fill="#3b9bd1"/>
<g fill="#4d4741"><rect x="568.800" y="99.700" width="8" height="10"/><rect x="571.400" y="119.300" width="7.500" height="9"/><rect x="574" y="134.400" width="7.500" height="10.500"/><rect x="658.500" y="98.800" width="8" height="9"/><rect x="661" y="116.600" width="7.500" height="9"/><rect x="662" y="136" width="9" height="10.500"/></g>
<path d="M584 165 667 163 668 172 586 175z" fill="#5e5a57"/>
<path d="M676.200 211.700 682.500 223.200 676.200 232 670 222.300z" fill="#5aa8d0" stroke="#4a7a90" stroke-width=".6"/>
<path d="M676 0h30l-4 5h-22z" fill="#a8a5a2" opacity=".7"/>
</svg>
</div>
<!-- terminal window -->
<div class="win" id="tw">
<div class="tb"></div>
<div class="tl in" style="left:16px;top:10px"></div><div class="abs" style="left:24.500px;top:18.500px;width:7px;height:7px;border-radius:50%;background:#c2c2c2;box-shadow:inset 0 1px 1px rgba(0,0,0,.25)"></div>
<div class="tl in" style="left:56px;top:10px"></div><div class="tl in" style="left:96px;top:10px"></div>
<svg class="abs" style="left:134px;top:9px" width="32" height="27" viewBox="0 0 32 27"><path d="M1 4a2 2 0 0 1 2-2h8l3 3h15a2 2 0 0 1 2 2v17a2 2 0 0 1-2 2H3a2 2 0 0 1-2-2z" fill="#b9cbdc"/><path d="M1 8h30v16a2 2 0 0 1-2 2H3a2 2 0 0 1-2-2z" fill="#cfdde9" stroke="#a9bccd" stroke-width=".8"/></svg>
<div class="abs ui" style="left:174px;top:4px;font-size:26px;line-height:38px;color:#828282;white-space:nowrap;text-shadow:0 1px 0 rgba(255,255,255,.7);-webkit-text-stroke-width:.35px">ld48-29 — lloeki@Coriolis: ~/Workspace/projects/ld48-29 — Vim — 88×50</div>
<svg class="fs" style="left:1216px;top:10px" width="28" height="28" viewBox="0 0 28 28"><g fill="#b8b8b8"><path d="M27 1v12l-4.200-4.200-5 5-3.600-3.600 5-5L15 1z"/><path d="M1 27V15l4.200 4.200 5-5 3.600 3.600-5 5L13 27z"/></g></svg>
<div class="tabs">
<div class="tab sel">lloeki@…/ld48-29</div>
<div class="tab" style="left:303px;width:297px">lloeki@…/ld48-29</div>
<div class="tab" style="left:600px">lloeki@…/ld48-29</div>
<div class="tab" style="left:898px;width:299px">lloeki@…/ld48-29</div>
</div>
<div class="term"><div class="r"><span class="ln"> 85 </span>    }<span class="e">¬</span></div><div class="r"><span class="ln"> 86 </span><span class="e">¬</span></div><div class="r"><span class="ln"> 87 </span>    dst := <span class="t">len</span>(raw) − raw_stride<span class="e">¬</span></div><div class="r"><span class="ln"> 88 </span>    <span class="k">for</span> src := <span class="n">0</span>; src &lt; <span class="t">len</span>(rgba.Pix); src += rgba.Stride {<span class="e">¬</span></div><div class="r"><span class="ln"> 89 </span>        <span class="t">copy</span>(raw[dst:dst+raw_stride], rgba.Pix[src:src+rgba.Stride])<span class="e">¬</span></div><div class="r"><span class="ln"> 90 </span>        dst −= raw_stride<span class="e">¬</span></div><div class="r"><span class="ln"> 91 </span>    }<span class="e">¬</span></div><div class="r"><span class="ln"> 92 </span><span class="e">¬</span></div><div class="r"><span class="ln"> 93 </span>    lod := <span class="n">0</span><span class="e">¬</span></div><div class="r"><span class="ln"> 94 </span>    border := <span class="n">0</span><span class="e">¬</span></div><div class="r"><span class="ln"> 95 </span>    gl.TexImage2D(gl.TEXTURE_2D, lod, gl.RGBA, width, height, border, gl.RGBA, gl.UNSIGNED_BY</div><div class="r"><span class="ln">    </span>TE, raw)<span class="e">¬</span></div><div class="r"><span class="ln"> 96 </span><span class="e">¬</span></div><div class="r"><span class="ln"> 97 </span>    <span class="k">return</span><span class="e">¬</span></div><div class="r"><span class="ln"> 98 </span>}<span class="e">¬</span></div><div class="r"><span class="ln"> 99 </span><span class="e">¬</span></div><div class="r cl"><span class="ln cln">100 </span><span class="k">func</span> spriteQuad<span class="mp">(</span>x <span class="t">int</span>, y <span class="t">int</span>, w <span class="t">int</span>, h <span class="t">int</span><span class="cur">)</span> {<span style="color:#c8c8c8">¬</span></div><div class="r"><span class="ln">101 </span>    size := <span class="n">256</span><span class="e">¬</span></div><div class="r"><span class="ln">102 </span>    unit := <span class="n">16</span><span class="e">¬</span></div><div class="r"><span class="ln">103 </span><span class="e">¬</span></div><div class="r"><span class="ln">104 </span>    x1 := x ∗ unit<span class="e">¬</span></div><div class="r"><span class="ln">105 </span>    y1 := y ∗ unit<span class="e">¬</span></div><div class="r"><span class="ln">106 </span>    x2 := x ∗ unit + w ∗ unit<span class="e">¬</span></div><div class="r"><span class="ln">107 </span>    y2 := y ∗ unit + h ∗ unit<span class="e">¬</span></div><div class="r"><span class="ln">108 </span><span class="e">¬</span></div><div class="r"><span class="ln">109 </span>    rx1 := <span class="t">float32</span>(x1) / <span class="t">float32</span>(size)<span class="e">¬</span></div><div class="r"><span class="ln">110 </span>    rx2 := <span class="t">float32</span>(x2) / <span class="t">float32</span>(size)<span class="e">¬</span></div><div class="r"><span class="ln">111 </span>    ry1 := <span class="t">float32</span>(y1) / <span class="t">float32</span>(size)<span class="e">¬</span></div><div class="r"><span class="ln">112 </span>    ry2 := <span class="t">float32</span>(y2) / <span class="t">float32</span>(size)<span class="e">¬</span></div><div class="r"><span class="ln">113 </span><span class="e">¬</span></div><div class="r"><span class="ln">114 </span>    gl.MatrixMode(gl.MODELVIEW)<span class="e">¬</span></div><div class="r"><span class="ln">115 </span>    gl.Begin(gl.QUADS)<span class="e">¬</span></div><div class="r"><span class="ln">116 </span>    gl.Normal3f(<span class="n">0</span>, <span class="n">0</span>, <span class="n">1</span>)<span class="e">¬</span></div><div class="r"><span class="ln">117 </span>    gl.TexCoord2f(rx1, ry1)<span class="e">¬</span></div><div class="r"><span class="ln">118 </span>    gl.Vertex3f(−1.0, −1.0, 1.0)<span class="e">¬</span></div><div class="r"><span class="ln">119 </span>    gl.TexCoord2f(rx2, ry1)<span class="e">¬</span></div><div class="r"><span class="ln">120 </span>    gl.Vertex3f(1.0, −1.0, 1.0)<span class="e">¬</span></div><div class="r"><span class="ln">121 </span>    gl.TexCoord2f(rx2, ry2)<span class="e">¬</span></div><div class="r"><span class="ln">122 </span>    gl.Vertex3f(1.0, 1.0, 1.0)<span class="e">¬</span></div><div class="r"><span class="ln">123 </span>    gl.TexCoord2f(rx1, ry2)<span class="e">¬</span></div><div class="r"><span class="ln">124 </span>    gl.Vertex3f(−1.0, 1.0, 1.0)<span class="e">¬</span></div><div class="r"><span class="ln">125 </span>    gl.End()<span class="e">¬</span></div><div class="r"><span class="ln">126 </span>}<span class="e">¬</span></div><div class="r"><span class="ln">127 </span><span class="e">¬</span></div><div class="r"><span class="ln">128 </span><span class="c">// main</span><span class="e">¬</span></div><div class="r"><span class="ln">129 </span><span class="e">¬</span></div><div class="r"><span class="ln">130 </span><span class="k">func</span> main() {<span class="e">¬</span></div><div class="r"><span class="ln">131 </span>    runtime.LockOSThread()<span class="e">¬</span></div><div class="r st"><span class="s1"> NORMAL </span><span class="s2"> <svg class="br" viewBox="0 0 28 28"><path d="M3.500 21.500H16M7.500 18.500 17.500 7.500H24.500" fill="none" stroke="#8ab4b4" stroke-width="1.800"/></svg>master </span><span class="s3"> ld48−29.go                          go </span><span class="s5"> utf−8[unix] </span><span class="s6">  45% <span class="nl"><b style="left:0;top:6px">N</b><b style="left:6px;top:14px">L</b></span> 100: 43  </span></div><div class="r msg">"ld48−29.go" 218L, 4844C written</div></div></div>
<!-- spritesheet editor window -->
<div class="win" id="sw">
<div class="tb"></div>
<div class="tl dk" style="left:18px;top:8.500px;width:23px;height:23px"></div><div class="tl dk" style="left:57.6px;top:8.500px;width:23px;height:23px"></div><div class="tl dk" style="left:97.5px;top:8.500px;width:23px;height:23px"></div>
<div class="abs ui" style="left:468px;top:6.500px;font-size:25.200px;line-height:34px;color:#9a9a9a;white-space:nowrap;text-shadow:0 2px 3px #000;-webkit-text-stroke-width:.45px">spritesheet <span style="color:#4c4c4c;padding:0 3px 0 2px">—</span> Edited</div>
<svg class="abs" style="left:1156px;top:10px" width="29" height="29" viewBox="0 0 28 28"><g fill="#8c8c8c"><path d="M27 1v12l-4.200-4.200-5 5-3.600-3.600 5-5L15 1z"/><path d="M1 27V15l4.200 4.200 5-5 3.600 3.600-5 5L13 27z"/></g></svg>
<div class="tool"><div class="abs" style="left:0;top:0;width:69px;height:41px;background:#222"></div><div class="abs" style="left:413px;top:0;width:1px;height:41px;background:#242424"></div></div>
<svg class="abs" style="left:18px;top:55px" width="22" height="22" viewBox="-11 -11 22 22"><g fill="#8c8c8c"><rect x="-2.300" y="-10.500" width="4.600" height="5" rx=".6" transform="rotate(0)"/><rect x="-2.300" y="-10.500" width="4.600" height="5" rx=".6" transform="rotate(45)"/><rect x="-2.300" y="-10.500" width="4.600" height="5" rx=".6" transform="rotate(90)"/><rect x="-2.300" y="-10.500" width="4.600" height="5" rx=".6" transform="rotate(135)"/><rect x="-2.300" y="-10.500" width="4.600" height="5" rx=".6" transform="rotate(180)"/><rect x="-2.300" y="-10.500" width="4.600" height="5" rx=".6" transform="rotate(225)"/><rect x="-2.300" y="-10.500" width="4.600" height="5" rx=".6" transform="rotate(270)"/><rect x="-2.300" y="-10.500" width="4.600" height="5" rx=".6" transform="rotate(315)"/><path fill-rule="evenodd" d="M0-7.800A7.800 7.800 0 1 0 0 7.800 7.800 7.800 0 1 0 0-7.800zM0-3.400A3.400 3.400 0 1 1 0 3.400 3.400 3.400 0 1 1 0-3.400z"/></g></svg><div class="abs ui" style="left:41px;top:64px;font-size:8px;line-height:14px;color:#8a8a8a">▼</div>
<div class="lbl" style="left:89.500px">Mode:</div><div class="rad" style="left:153px;top:58px"></div><div class="abs" style="left:159px;top:64px;width:6px;height:6px;border-radius:50%;background:#a8a8a8"></div><div class="lbl" style="left:183px">Zoom In</div><div class="rad" style="left:275px;top:58px"></div><div class="lbl" style="left:305px">Zoom Out</div><div class="lbl" style="left:433.500px">Zoom:</div>
<div class="abs" style="left:501px;top:65px;width:228px;height:4px;border-radius:2px;background:#0a0a0a;box-shadow:0 1px 0 #303030"></div><div class="abs" style="left:633px;top:58px;width:18px;height:18px;border-radius:50%;background:linear-gradient(180deg,#444,#333);border:1px solid #222;box-shadow:0 1px 2px #000"></div><div class="abs ui" style="left:747px;top:50px;width:70px;height:31px;border:1px solid #2c2c2c;background:#191919;font-size:16.400px;line-height:31px;color:#868686;padding-left:7px">800%</div>
<div class="abs" style="left:0;top:91px;width:100%;height:31px;background:#1b1b1b;border-bottom:1px solid #000"><div class="abs" style="left:511px;top:1px;width:1px;height:29px;background:#8c8c8c"></div><div class="abs" style="left:591px;top:1px;width:1px;height:29px;background:#8c8c8c"></div><div class="abs" style="left:671px;top:1px;width:1px;height:29px;background:#8c8c8c"></div><div class="abs" style="left:751px;top:1px;width:1px;height:29px;background:#8c8c8c"></div><div class="abs" style="left:831px;top:1px;width:1px;height:29px;background:#8c8c8c"></div><div class="abs" style="left:911px;top:1px;width:1px;height:29px;background:#8c8c8c"></div><div class="abs" style="left:991px;top:1px;width:1px;height:29px;background:#8c8c8c"></div><div class="abs" style="left:1071px;top:1px;width:1px;height:29px;background:#8c8c8c"></div><div class="abs" style="left:1151px;top:1px;width:1px;height:29px;background:#8c8c8c"></div></div>
<svg class="abs" style="left:0;top:91px" width="461" height="821" viewBox="0 0 461 821" shape-rendering="crispEdges"><rect x="0" y="0" width="461" height="31" fill="#1b1b1b"/><rect x="0" y="0" width="31" height="821" fill="#1a1a1a"/><rect x="0" y="30" width="461" height="1" fill="#000"/><rect x="30" y="0" width="1" height="821" fill="#000"/><path d="M14.500 2V29M2 22.500H29" stroke="#777" stroke-width="1" stroke-dasharray="2 2" fill="none"/><path d="M31.5 1V30M39.5 22V30M47.5 22V30M55.5 22V30M63.5 22V30M71.5 18V30M79.5 22V30M87.5 22V30M95.5 22V30M103.5 22V30M111.5 1V30M119.5 22V30M127.5 22V30M135.5 22V30M143.5 22V30M151.5 18V30M159.5 22V30M167.5 22V30M175.5 22V30M183.5 22V30M191.5 1V30M199.5 22V30M207.5 22V30M215.5 22V30M223.5 22V30M231.5 18V30M239.5 22V30M247.5 22V30M255.5 22V30M263.5 22V30M271.5 1V30M279.5 22V30M287.5 22V30M295.5 22V30M303.5 22V30M311.5 18V30M319.5 22V30M327.5 22V30M335.5 22V30M343.5 22V30M351.5 1V30M359.5 22V30M367.5 22V30M375.5 22V30M383.5 22V30M391.5 18V30M399.5 22V30M407.5 22V30M415.5 22V30M423.5 22V30M431.5 1V30M439.5 22V30M447.5 22V30M455.5 22V30M22 37.5H30M22 45.5H30M1 53.5H30M22 61.5H30M22 69.5H30M22 77.5H30M22 85.5H30M17 93.5H30M22 101.5H30M22 109.5H30M22 117.5H30M22 125.5H30M1 133.5H30M22 141.5H30M22 149.5H30M22 157.5H30M22 165.5H30M17 173.5H30M22 181.5H30M22 189.5H30M22 197.5H30M22 205.5H30M1 213.5H30M22 221.5H30M22 229.5H30M22 237.5H30M22 245.5H30M17 253.5H30M22 261.5H30M22 269.5H30M22 277.5H30M22 285.5H30M1 293.5H30M22 301.5H30M22 309.5H30M22 317.5H30M22 325.5H30M17 333.5H30M22 341.5H30M22 349.5H30M22 357.5H30M22 365.5H30M1 373.5H30M22 381.5H30M22 389.5H30M22 397.5H30M22 405.5H30M17 413.5H30M22 421.5H30M22 429.5H30M22 437.5H30M22 445.5H30M1 453.5H30M22 461.5H30M22 469.5H30M22 477.5H30M22 485.5H30M17 493.5H30M22 501.5H30M22 509.5H30M22 517.5H30M22 525.5H30M1 533.5H30M22 541.5H30M22 549.5H30M22 557.5H30M22 565.5H30M17 573.5H30M22 581.5H30M22 589.5H30M22 597.5H30M22 605.5H30M1 613.5H30M22 621.5H30M22 629.5H30M22 637.5H30M22 645.5H30M17 653.5H30M22 661.5H30M22 669.5H30M22 677.5H30M22 685.5H30M1 693.5H30M22 701.5H30M22 709.5H30M22 717.5H30M22 725.5H30M17 733.5H30M22 741.5H30M22 749.5H30M22 757.5H30M22 765.5H30M1 773.5H30M22 781.5H30M22 789.5H30M22 797.5H30M22 805.5H30M17 813.5H30" stroke="#8c8c8c" stroke-width="1" fill="none"/></svg>
<div class="rt" style="left:35px;top:97px">0</div><div class="rt" style="left:115px;top:97px">10</div><div class="rt" style="left:195px;top:97px">20</div><div class="rt" style="left:275px;top:97px">30</div><div class="rt" style="left:355px;top:97px">40</div><div class="rt" style="left:435px;top:97px">50</div>
<div class="rt" style="left:6px;top:150px;width:10px;text-align:center;line-height:17.700px">1<br>6<br>0</div><div class="rt" style="left:6px;top:230px;width:10px;text-align:center;line-height:17.700px">1<br>7<br>0</div><div class="rt" style="left:6px;top:310px;width:10px;text-align:center;line-height:17.700px">1<br>8<br>0</div><div class="rt" style="left:6px;top:390px;width:10px;text-align:center;line-height:17.700px">1<br>9<br>0</div><div class="rt" style="left:6px;top:470px;width:10px;text-align:center;line-height:17.700px">2<br>0<br>0</div><div class="rt" style="left:6px;top:550px;width:10px;text-align:center;line-height:17.700px">2<br>1<br>0</div><div class="rt" style="left:6px;top:630px;width:10px;text-align:center;line-height:17.700px">2<br>2<br>0</div><div class="rt" style="left:6px;top:710px;width:10px;text-align:center;line-height:17.700px">2<br>3<br>0</div><div class="rt" style="left:6px;top:790px;width:10px;text-align:center;line-height:17.700px">2<br>4<br>0</div><div class="rt" style="left:6px;top:870px;width:10px;text-align:center;line-height:17.700px">2<br>5<br>0</div>
<svg class="abs" style="left:31px;top:122px" width="430" height="790" viewBox="0 0 430 790" shape-rendering="crispEdges"><defs><pattern id="gd" x="0" y="-2" width="8" height="8" patternUnits="userSpaceOnUse"><path d="M0 .5H8" stroke="#868a90" stroke-opacity=".95" stroke-width="1" stroke-dasharray="1 1"/><path d="M.5 0V8" stroke="#868a90" stroke-opacity=".95" stroke-width="1" stroke-dasharray="1 1"/></pattern></defs><rect width="430" height="790" fill="#ff5a25"/><path d="M0 -58h8v888h-8zM256 -58h8v888h-8zM0 22h488v8h-488zM0 278h488v8h-488zM0 534h488v8h-488zM0 790h488v8h-488zM128 -2h8v56h-8zM128 254h8v56h-8zM128 510h8v56h-8zM128 766h8v56h-8zM128 126h8v56h-8zM104 150h56v8h-56zM128 382h8v56h-8zM104 406h56v8h-56zM128 638h8v56h-8zM104 662h56v8h-56zM384 -2h8v56h-8zM384 254h8v56h-8zM384 510h8v56h-8zM384 766h8v56h-8zM384 126h8v56h-8zM360 150h56v8h-56zM384 382h8v56h-8zM360 406h56v8h-56zM384 638h8v56h-8zM360 662h56v8h-56zM0 150h32v8h-32zM232 150h56v8h-56zM0 406h32v8h-32zM232 406h56v8h-56zM0 662h32v8h-32zM232 662h56v8h-56z" fill="#7dbf54"/><path d="M56 694h8v8h-8zM64 694h8v8h-8zM72 694h8v8h-8zM48 702h8v8h-8zM80 702h8v8h-8zM48 710h8v8h-8zM72 710h8v8h-8zM80 710h8v8h-8zM48 718h8v8h-8zM64 718h8v8h-8zM80 718h8v8h-8zM48 726h8v8h-8zM56 726h8v8h-8zM80 726h8v8h-8zM48 734h8v8h-8zM80 734h8v8h-8zM56 742h8v8h-8zM64 742h8v8h-8zM72 742h8v8h-8z" fill="#000"/><rect width="430" height="790" fill="url(#gd)"/><path d="M128.5 0V790M256.5 0V790M384.5 0V790M0 22.5H430M0 150.5H430M0 278.5H430M0 406.5H430M0 534.5H430M0 662.5H430M0 790.5H430" stroke="#7f8f9f" stroke-width="1" fill="none"/></svg>
</div>
<!-- game window -->
<div class="win" id="gw">
<div class="tb"></div>
<div class="tl gr" style="left:16px;top:10px"></div><div class="tl gr" style="left:56px;top:10px"></div><div class="tl gr" style="left:96px;top:10px"></div>
<div class="abs ui" style="left:0;top:4px;width:100%;text-align:center;font-size:26.6px;line-height:36px;color:#3c3c3c;text-shadow:0 1px 0 rgba(255,255,255,.7)">LD48-29</div>
<svg class="abs" style="left:1243px;top:8px" width="28" height="28" viewBox="0 0 28 28"><g fill="#9a9a9a"><path d="M27 1v12l-4.200-4.200-5 5-3.600-3.600 5-5L15 1z"/><path d="M1 27V15l4.200 4.200 5-5 3.600 3.600-5 5L13 27z"/></g></svg>
<svg class="abs" style="left:320px;top:284px" width="640" height="480" viewBox="0 0 64 64" preserveAspectRatio="none" shape-rendering="crispEdges"><rect width="64" height="64" fill="#cb4712"/><path d="M0 0h1v64h-1zM32 0h1v64h-1zM0 0h64v1h-64zM0 32h64v1h-64zM16 0h1v4h-1zM16 29h1v7h-1zM16 61h1v3h-1zM16 13h1v7h-1zM13 16h7v1h-7zM16 45h1v7h-1zM13 48h7v1h-7zM48 0h1v4h-1zM48 29h1v7h-1zM48 61h1v3h-1zM48 13h1v7h-1zM45 16h7v1h-7zM48 45h1v7h-1zM45 48h7v1h-7zM0 16h4v1h-4zM29 16h7v1h-7zM61 16h3v1h-3zM0 48h4v1h-4zM29 48h7v1h-7zM61 48h3v1h-3z" fill="#6a9b3f"/><path d="M7 52h1v1h-1zM8 52h1v1h-1zM9 52h1v1h-1zM6 53h1v1h-1zM10 53h1v1h-1zM6 54h1v1h-1zM9 54h1v1h-1zM10 54h1v1h-1zM6 55h1v1h-1zM8 55h1v1h-1zM10 55h1v1h-1zM6 56h1v1h-1zM7 56h1v1h-1zM10 56h1v1h-1zM6 57h1v1h-1zM10 57h1v1h-1zM7 58h1v1h-1zM8 58h1v1h-1zM9 58h1v1h-1z" fill="#000"/></svg>
</div>
<div id="mb">
<svg style="left:39px;top:2px" width="32" height="38" viewBox="0 0 170 200"><defs><linearGradient id="apg" x1="0" y1="0" x2="0" y2="1"><stop offset="0" stop-color="#111"/><stop offset=".55" stop-color="#2a3038"/><stop offset="1" stop-color="#59636e"/></linearGradient></defs><path fill="url(#apg)" d="M150.4 172.3c-8 11.8-16.5 23.5-29.600 23.8c-13 .3-17.200-7.700-32-7.700c-14.900 0-19.500 7.400-31.800 8c-12.800.5-22.500-12.800-30.600-24.500C9.700 147.800-3.100 104.100 14 74.300c8.500-14.800 23.700-24.200 40.200-24.400c12.500-.2 24.400 8.500 32 8.500c7.700 0 22.100-10.500 37.200-8.900c6.300.3 24.100 2.600 35.500 19.200c-.900.6-21.200 12.400-21 37c.3 29.400 25.800 39.200 26.100 39.300c-.3.700-4.100 13.900-13.600 27.300zM95.200 18.500C102.200 10.300 114 4.200 123.700 3.800c1.200 11.300-3.300 22.700-10.100 30.800c-6.700 8.200-17.800 14.500-28.600 13.700c-1.500-11.100 4-22.700 10.200-29.800z"/></svg>
<div class="mi" style="left:109px;font-weight:bold;font-size:27.5px">ld48-29</div>
<div class="mi" style="left:266px">Window</div>
<!-- dropbox -->
<svg style="left:1892px;top:5px" width="36" height="33" viewBox="0 0 36 33"><g fill="#111"><path d="M9.500 .5 18 6.300 9.500 12.100 1 6.300zM26.500 .5 35 6.300 26.500 12.100 18 6.300zM1 17.900 9.500 12.100 18 17.900 9.500 23.700zM26.500 12.100 35 17.900 26.500 23.700 18 17.900zM9.700 25.600 18 20 26.300 25.600 18 31.200z"/></g></svg>
<!-- time machine -->
<svg style="left:1946px;top:5px" width="40" height="34" viewBox="0 0 40 34"><path d="M8.700 14.200A12.900 12.900 0 1 1 13.100 26.300" fill="none" stroke="#111" stroke-width="3.400" stroke-linecap="butt"/><path fill="#111" d="M2.500 15.100 13.600 14.300 7.700 23.300z"/><rect x="19.400" y="8.200" width="3.900" height="10.800" rx=".8" fill="#111"/><rect x="19.400" y="20.700" width="3.900" height="3.600" rx=".6" fill="#111"/></svg>
<!-- bluetooth -->
<svg style="left:2016px;top:6px" width="20" height="30" viewBox="0 0 20 30"><path fill="none" stroke="#111" stroke-width="2.200" stroke-linejoin="miter" d="M2.500 8.500 16 21.500 9.500 28V2L16 8.500 2.500 21.500"/></svg>
<!-- wifi -->
<svg style="left:2063px;top:6px" width="46" height="32" viewBox="0 0 46 32"><g fill="none" stroke="#111" stroke-width="4.600" stroke-linecap="butt"><path d="M2.500 12.500A29 29 0 0 1 43.500 12.500"/><path d="M9.200 19.200A19.500 19.500 0 0 1 36.800 19.200"/><path d="M15.800 25.600A10.200 10.200 0 0 1 30.200 25.600"/></g><path fill="#111" d="M19.500 28.200 23 31.700 26.500 28.200A5 5 0 0 0 19.500 28.200z"/></svg>
<!-- volume -->
<svg style="left:2127px;top:6px" width="38" height="32" viewBox="0 0 38 32"><path fill="#111" d="M1 11h6.500L16 3.500v25L7.500 21H1z"/><g fill="none" stroke="#111" stroke-width="2.800" stroke-linecap="round"><path d="M20.500 11.500A6.500 6.500 0 0 1 20.500 20.500"/><path d="M24.500 7A12.500 12.500 0 0 1 24.500 25"/><path d="M28.500 2.500A18.500 18.500 0 0 1 28.500 29.500"/></g></svg>
<!-- battery -->
<svg style="left:2184px;top:9px" width="48" height="27" viewBox="0 0 48 27"><path d="M6.500 2.200H37.500Q39.300 2.200 39.300 4V23Q39.300 24.800 37.500 24.800H6.500C.8 20 .8 7 6.500 2.200z" fill="none" stroke="#111" stroke-width="3.200" stroke-linejoin="round"/><path fill="#111" d="M42.300 8.800a3.200 4.700 0 0 1 0 9.400z"/><path fill="#111" d="M10.500 12.300h6.800C17.600 8.500 20.500 6.400 26 6.400v3.100h4.300v2.400H26v3.200h4.300v2.400H26v3.100c-5.500 0-8.400-2.100-8.700-5.900h-6.800z"/></svg>
<div class="mi" style="left:2254px;font-size:27px">Sat 15:24</div>
<!-- search -->
<svg style="left:2416px;top:7px" width="34" height="32" viewBox="0 0 34 32"><circle cx="13" cy="12.500" r="9.500" fill="none" stroke="#111" stroke-width="4"/><path d="M20 20 30.500 30" stroke="#111" stroke-width="5" stroke-linecap="round"/></svg>
<!-- list -->
<svg style="left:2477px;top:8px" width="46" height="28" viewBox="0 0 46 28"><g fill="#111"><rect x="0" y="0" width="6.500" height="6.500" rx="1.500"/><rect x="0" y="10.500" width="6.500" height="6.500" rx="1.500"/><rect x="0" y="21" width="6.500" height="6.500" rx="1.500"/><rect x="11" y="0" width="33" height="6.500" rx="2.500"/><rect x="11" y="10.500" width="26" height="6.500" rx="2.500"/><rect x="11" y="21" width="29" height="6.500" rx="2.500"/></g></svg>
</div>
</body></html>
